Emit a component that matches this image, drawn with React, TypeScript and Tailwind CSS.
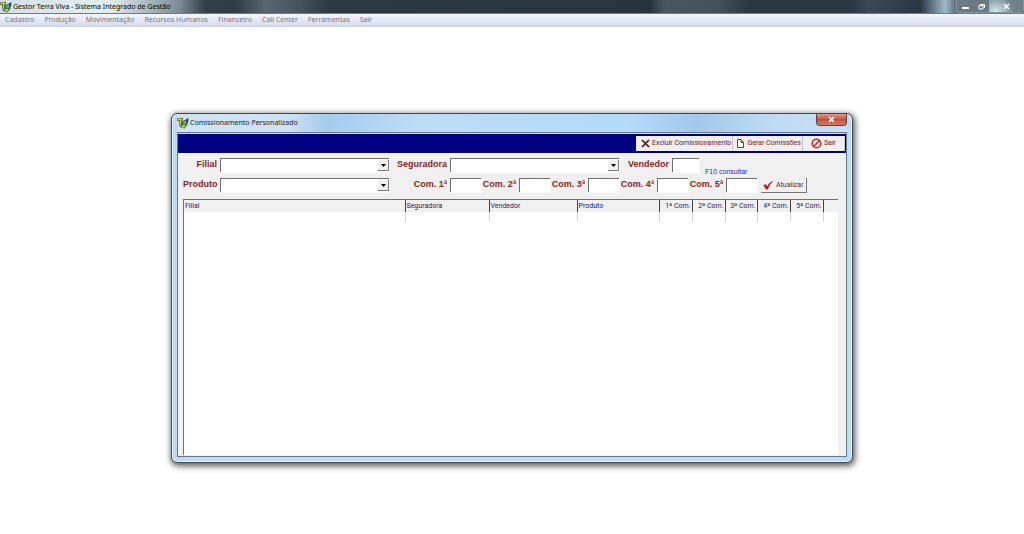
import React from 'react';

const menuItems = [
  'Cadastro',
  'Produção',
  'Movimentação',
  'Recursos Humanos',
  'Financeiro',
  'Call Center',
  'Ferramentas',
  'Sair',
];

const columns = [
  { label: 'Filial', width: 'w-[221px]' },
  { label: 'Seguradora', width: 'w-[84px]' },
  { label: 'Vendedor', width: 'w-[88px]' },
  { label: 'Produto', width: 'w-[82px]' },
  { label: '1ª Com.', width: 'w-[33px]', numeric: true },
  { label: '2ª Com.', width: 'w-[33px]', numeric: true },
  { label: '3ª Com.', width: 'w-[32px]', numeric: true },
  { label: '4ª Com.', width: 'w-[33px]', numeric: true },
  { label: '5ª Com.', width: 'w-[33px]', numeric: true },
];

const AppIcon = () => (
  <svg viewBox="0 0 12 12" className="size-3 shrink-0" aria-hidden="true">
    <path d="M0 1.500 6 .800v2.400L4.800 3.400 5 10 2.500 9.500 2.200 4 .500 4.200z" fill="#4c571c" />
    <path d="M.800 2 5.500 1.500v1L4 2.800l.300 6-1-.300L3 3 1 3.200z" fill="#e6e23a" />
    <path d="M5 4 10.500 2 10.500 7.500 7.500 11.500 3.500 10.500z" fill="#3d6b3c" />
    <path d="M6 4.800 9.500 3.800 9 6.500 6.500 7z" fill="#5fb0bd" />
    <path d="M4.500 8.500 8.500 7.500 7.500 10.500 5 10.800z" fill="#c4d23c" />
    <path d="M9 2.500 11.500 1 11 5.500 10 6z" fill="#2a3a48" />
  </svg>
);

interface FieldProps {
  id: string;
  label: string;
  labelWidth: string;
}

const labelClass = "shrink-0 text-right text-[9px] leading-3 font-bold whitespace-nowrap text-[#8a1f22]";
const sunken = "rounded-none border-t border-l border-[#6f6f6f] bg-white shadow-[1px_1px_0_#fafafa] outline-none";
const smallText = "font-['Roboto','Liberation_Sans',sans-serif] text-[7px]";

const SelectField = ({ id, label, labelWidth }: FieldProps) => (
  <div className="flex items-start gap-[3px]">
    <label htmlFor={id} className={`${labelClass} ${labelWidth}`}>{label}</label>
    <div className="relative">
      <select id={id} className={`${sunken} block h-[14px] w-[169px] appearance-none px-1 text-[7px]`} />
      <span className="pointer-events-none absolute top-[2px] right-0 flex h-[11px] w-[11px] items-center justify-center border-r border-b border-[#7a7a7a] bg-[#f0f0f0]">
        <svg viewBox="0 0 5 3" className="h-[3px] w-[5px]" aria-hidden="true">
          <path d="M0 0h5L2.500 3z" fill="#000" />
        </svg>
      </span>
    </div>
  </div>
);

const TextField = ({ id, label, labelWidth, width = 'w-[31px]' }: FieldProps & { width?: string }) => (
  <div className="flex items-start gap-[3px]">
    <label htmlFor={id} className={`${labelClass} ${labelWidth}`}>{label}</label>
    <input id={id} type="text" className={`${sunken} block h-[14px] px-1 text-[7px] ${width}`} />
  </div>
);

const ToolButton = ({ children, className }: { children: React.ReactNode; className: string }) => (
  <button
    type="button"
    className={`flex h-full items-center gap-[2px] border-r border-[#c9c5c1] whitespace-nowrap ${className}`}
  >
    {children}
  </button>
);

const TitleBar = () => (
  <header className="flex h-[14px] items-center justify-between border-b border-[#777] bg-[linear-gradient(90deg,#d3e1e6_0,#e2edef_110px,#b5c3ca_140px,#7c8992_180px,#323e4a_205px,#303b47_235px,#596670_265px,#46525d_300px,#2c3844_330px,#2a3541_600px,#27323e_650px,#4a5763_665px,#44515d_720px,#2a3642_750px,#2b3743_850px,#3b4856_870px,#2a3642_920px,#9fb8cb_945px,#66747f_955px,#66747f_100%)]">
    <div className="flex items-center gap-px">
      <AppIcon />
      <h1 className="text-[7px] leading-3 text-black">Gestor Terra Viva - Sistema Integrado de Gestão</h1>
    </div>
    <div className="flex h-full items-stretch rounded-b border border-t-0 border-[#8795a0] bg-[#6b7985] text-white">
      <button type="button" aria-label="Minimizar" className="flex w-[17px] items-center justify-center">
        <svg viewBox="0 0 7 7" className="size-[7px]"><path d="M0 4h7v2H0z" fill="#fff" /></svg>
      </button>
      <button type="button" aria-label="Restaurar" className="flex w-[15px] items-center justify-center">
        <svg viewBox="0 0 7 7" className="size-[7px]" fill="none" stroke="#fff">
          <path d="M2 1.500h4.500v3.500M1 2.500h4v3.500H1z" />
        </svg>
      </button>
      <button type="button" aria-label="Fechar" className="flex w-[34px] items-center justify-center bg-[radial-gradient(circle_at_20%_100%,#d3ecef,#71808b_60%)]">
        <svg viewBox="0 0 7 7" className="size-[7px]"><path d="M1 1l5 5M6 1 1 6" stroke="#fff" strokeWidth="1.600" /></svg>
      </button>
    </div>
  </header>
);

const App = () => {
  return (
    <div className="min-h-screen bg-white font-['Liberation_Sans',Arial,sans-serif]">
      <div className="font-['Noto_Sans','Open_Sans',sans-serif]">
        <TitleBar />
        <nav className="flex h-[13px] items-center gap-[10px] border-b border-[#cfd3da] bg-linear-to-b from-[#f4f6fc] to-[#d5dbf0] px-[5px]">
          {menuItems.map((item) => (
            <a key={item} href="#" className="text-[7px] leading-3 whitespace-nowrap text-[#74757c]">{item}</a>
          ))}
        </nav>
      </div>

      <section
        role="dialog"
        aria-labelledby="dialog-title"
        className="mx-auto mt-[86px] w-full max-w-[682px] rounded-md border border-[#3d4a57] bg-[#c0daf2] px-[5px] pb-[5px] shadow-[1px_2px_6px_1px_rgba(0,0,0,0.65),inset_0_0_0_1px_#e8f3fc]"
      >
        <div className="flex h-[18px] items-start justify-between bg-[linear-gradient(90deg,#cfe3f5_0,#cde2f5_110px,#a5cbec_150px,#bddcf6_240px,#b5dafa_450px,#a3c8e8_520px,#bfdcf3_600px,#c8def2_100%)] font-['Noto_Sans','Open_Sans',sans-serif]">
          <div className="flex h-full items-center gap-px">
            <AppIcon />
            <h2 id="dialog-title" className="text-[7px] leading-3 text-[#1c1c1c]">Comissionamento Personalizado</h2>
          </div>
          <button
            type="button"
            aria-label="Fechar janela"
            className="flex h-3 w-[31px] items-center justify-center rounded-b-sm border border-t-0 border-[#6d3a38] bg-linear-to-b from-[#dc9a8d] via-[#c4513f] to-[#d07a62]"
          >
            <svg viewBox="0 0 7 7" className="size-[7px]"><path d="M1 1l5 5M6 1 1 6" stroke="#fff" strokeWidth="1.600" /></svg>
          </button>
        </div>

        <div className="border border-[#66788a] bg-[#f0f0f0]">
          <div className="flex h-5 justify-end border-t border-[#d5dbe5] bg-[#000080] py-[2px] pr-px">
            <div className={`${smallText} flex bg-[#f0eeee] text-[#6b2024]`}>
              <ToolButton className="pl-[5px] pr-px">
                <svg viewBox="0 0 9 9" className="size-[9px]" fill="none" stroke="#5a1216" strokeWidth="1.700">
                  <path d="M1 1l7 7M8 1 1 8" />
                </svg>
                Excluir Comissionamento
              </ToolButton>
              <ToolButton className="pl-[3px] pr-px">
                <svg viewBox="0 0 9 9" className="size-[9px]" fill="#fdfdf2" stroke="#4d5217">
                  <path d="M1.500.500h3.500l2.500 3v5h-6zM5 .500v3h2.500" />
                </svg>
                Gerar Comissões
              </ToolButton>
              <ToolButton className="px-[8px]">
                <svg viewBox="0 0 11 11" className="size-[11px]" fill="none" stroke="#c8282c" strokeWidth="1.600">
                  <circle cx="5.500" cy="5.500" r="4.300" />
                  <path d="M2.500 8.500l6-6" />
                </svg>
                Sair
              </ToolButton>
            </div>
          </div>

          <form className="px-[5px] pt-[5px]" onSubmit={(e) => e.preventDefault()}>
            <div className="flex h-[15px] items-start">
              <SelectField id="filial" label="Filial" labelWidth="w-[34px]" />
              <SelectField id="seguradora" label="Seguradora" labelWidth="w-[58px]" />
              <TextField id="vendedor" label="Vendedor" labelWidth="w-[50px]" width="w-[27px]" />
              <span className="mt-2 ml-[6px] text-[7px] leading-3 text-[#2626c4]">F10 consultar</span>
            </div>
            <div className="mt-[5px] flex h-[15px] items-start">
              <SelectField id="produto" label="Produto" labelWidth="w-[34px]" />
              <TextField id="com1" label="Com. 1ª" labelWidth="w-[58px]" />
              <TextField id="com2" label="Com. 2ª" labelWidth="w-[35px]" />
              <TextField id="com3" label="Com. 3ª" labelWidth="w-[35px]" />
              <TextField id="com4" label="Com. 4ª" labelWidth="w-[35px]" />
              <TextField id="com5" label="Com. 5ª" labelWidth="w-[35px]" />
              <button
                type="submit"
                className={`${smallText} ml-1 flex h-[15px] items-center gap-[2px] border-r border-b border-[#777] bg-[#f0f0f0] px-[2px] text-[#6b2024]`}
              >
                <svg viewBox="0 0 11 10" className="h-[10px] w-[11px]">
                  <path d="M.500 5.500 2.200 4l2 2.200Q6.500 2 10.500.500 6.800 4 4.800 9.500H3.200z" fill="#b5191d" />
                </svg>
                Atualizar
              </button>
            </div>
          </form>

          <div className="mt-[6px] mr-2 mb-px ml-[5px] min-h-[256px] border-t border-l border-[#707070] bg-white">
            <table className={`${smallText} w-full table-fixed border-collapse leading-3 text-[#22226e]`}>
              <thead>
                <tr className="h-3 bg-[#f0f0f0]">
                  {columns.map((col) => (
                    <th
                      key={col.label}
                      scope="col"
                      className={`${col.width} border-r border-[#444] px-[1px] py-0 font-normal whitespace-nowrap ${col.numeric ? 'text-right' : 'text-left'}`}
                    >
                      {col.label}
                    </th>
                  ))}
                  <td className="p-0" />
                </tr>
              </thead>
              <tbody>
                <tr className="h-[10px]">
                  {columns.map((col) => (
                    <td key={col.label} className="border-r border-[#d4d4d4] p-0" />
                  ))}
                  <td className="p-0" />
                </tr>
              </tbody>
            </table>
          </div>
        </div>
      </section>
    </div>
  );
};

export default App;
